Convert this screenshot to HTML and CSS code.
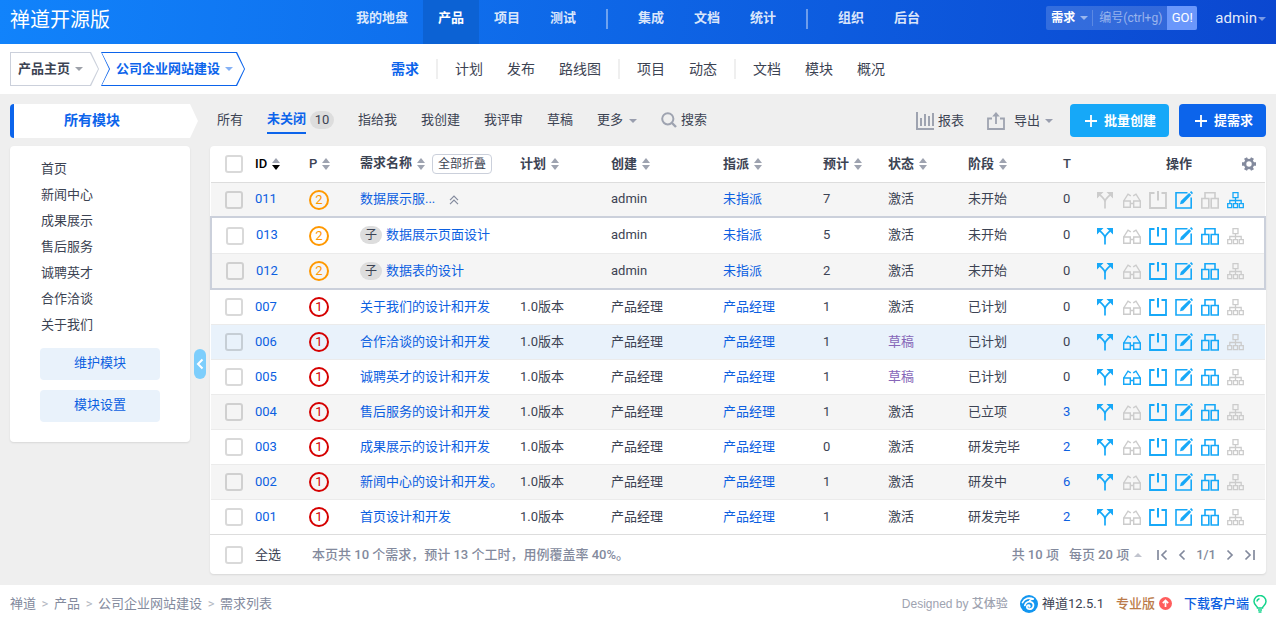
FILE: index.html
```html
<!DOCTYPE html>
<html lang="zh-CN">
<head>
    <meta charset="UTF-8">
    <meta name="viewport" content="width=device-width, initial-scale=1.0">
    <title>需求列表</title>
    <link rel="stylesheet" href="styles.css">
</head>
<body>
    <!-- icon set -->
    <svg class="icon-defs" aria-hidden="true">
        <symbol id="i-fork" viewBox="0 0 18 18">
            <path d="M8 17.500V11C8 8 5.500 6.500 3 4M8 11C8 8 10.500 6.500 13 4" fill="none" stroke="currentColor" stroke-width="1.700"/>
            <path d="M0 1h6.500L0 7.500zM16 1H9.500l6.500 6.500z" fill="currentColor"/>
        </symbol>
        <symbol id="i-glasses" viewBox="0 0 18 18">
            <path d="M.7 10h6.600v6.300H.7zM10.700 10h6.600v6.300h-6.600zM7.300 12.500h3.400M.7 10L5 3.200l2.800 1.600M17.300 10L13 3.200l-2.800 1.600" fill="none" stroke="currentColor" stroke-width="1.400"/>
        </symbol>
        <symbol id="i-close" viewBox="0 0 18 18">
            <path d="M5.500 2H1v15h16V2h-4.500" fill="none" stroke="currentColor" stroke-width="1.800"/>
            <path d="M9 0v9.500" stroke="currentColor" stroke-width="2"/>
        </symbol>
        <symbol id="i-edit" viewBox="0 0 18 18">
            <path d="M12.500 1.800H1V17h15.200V6.500" fill="none" stroke="currentColor" stroke-width="1.600"/>
            <path d="M5 13.200l.8-3.200 8.300-8 2.100 2.100-8 8.300zM14.900 1.200L16.200 0 18 1.900l-1.100 1.400z" fill="currentColor"/>
        </symbol>
        <symbol id="i-copy" viewBox="0 0 18 18">
            <path d="M4 7.500V1.800h10V7.500M.8 7.500h7V17h-7zM10.200 7.500h7V17h-7z" fill="none" stroke="currentColor" stroke-width="1.600"/>
        </symbol>
        <symbol id="i-tree" viewBox="0 0 18 18">
            <path d="M6 1.600h5v5H6zM8.500 6.600v6M2.800 12.600V9.500h11.400v3.100M.7 12.600h4v4h-4zM6.500 12.600h4v4h-4zM12.300 12.600h4v4h-4z" fill="none" stroke="currentColor" stroke-width="1.300"/>
        </symbol>
        <symbol id="i-sort" viewBox="0 0 10 14">
            <path class="up" d="M1 6l4-5 4 5z"/>
            <path class="down" d="M1 8l4 5 4-5z"/>
        </symbol>
        <symbol id="i-plus" viewBox="0 0 14 14">
            <path d="M7 1v12M1 7h12" stroke="currentColor" stroke-width="1.800"/>
        </symbol>
    </svg>

    <header class="header">
        <h1 class="brand">禅道开源版</h1>
        <nav class="main-nav">
            <a href="#">我的地盘</a>
            <a href="#" class="active">产品</a>
            <a href="#">项目</a>
            <a href="#">测试</a>
            <span class="divider"></span>
            <a href="#">集成</a>
            <a href="#">文档</a>
            <a href="#">统计</a>
            <span class="divider"></span>
            <a href="#">组织</a>
            <a href="#">后台</a>
        </nav>
        <div class="header-right">
            <form class="search-box">
                <button type="button" class="search-type">需求<span class="caret"></span></button>
                <input type="text" placeholder="编号(ctrl+g)" aria-label="编号">
                <button type="button" class="search-go">GO!</button>
            </form>
            <a href="#" class="user">admin<span class="caret"></span></a>
        </div>
    </header>

    <div class="subheader">
        <div class="switchers">
            <button type="button" class="crumb crumb-home"><span>产品主页</span><span class="caret"></span></button>
            <button type="button" class="crumb crumb-product"><span>公司企业网站建设</span><span class="caret"></span></button>
        </div>
        <nav class="sub-nav">
            <a href="#" class="active">需求</a>
            <span class="divider"></span>
            <a href="#">计划</a>
            <a href="#">发布</a>
            <a href="#">路线图</a>
            <span class="divider"></span>
            <a href="#">项目</a>
            <a href="#">动态</a>
            <span class="divider"></span>
            <a href="#">文档</a>
            <a href="#">模块</a>
            <a href="#">概况</a>
        </nav>
    </div>

    <main class="main">
        <aside class="sidebar">
            <div class="module-title">所有模块</div>
            <div class="module-card">
                <ul>
                    <li><a href="#">首页</a></li>
                    <li><a href="#">新闻中心</a></li>
                    <li><a href="#">成果展示</a></li>
                    <li><a href="#">售后服务</a></li>
                    <li><a href="#">诚聘英才</a></li>
                    <li><a href="#">合作洽谈</a></li>
                    <li><a href="#">关于我们</a></li>
                </ul>
                <a href="#" class="module-btn">维护模块</a>
                <a href="#" class="module-btn">模块设置</a>
            </div>
        </aside>
        <div class="splitter">
            <button type="button" class="collapse" aria-label="收起">
                <svg width="8" height="12" viewBox="0 0 8 12"><path d="M6.500 1.500L2 6l4.500 4.500" fill="none" stroke="currentColor" stroke-width="2"/></svg>
            </button>
        </div>

        <section class="content">
            <div class="toolbar">
                <div class="filters">
                    <a href="#">所有</a>
                    <a href="#" class="active"><span class="label">未关闭</span><span class="count">10</span></a>
                    <a href="#">指给我</a>
                    <a href="#">我创建</a>
                    <a href="#">我评审</a>
                    <a href="#">草稿</a>
                    <a href="#">更多<span class="caret"></span></a>
                    <a href="#" class="search-link"><svg width="16" height="16" viewBox="0 0 16 16"><path d="M11 11l4 4" stroke="currentColor" stroke-width="2.400"/><circle cx="6.800" cy="6.800" r="5.600" fill="none" stroke="currentColor" stroke-width="2"/></svg>搜索</a>
                </div>
                <div class="tools">
                    <a href="#" class="tool report"><svg width="18" height="18" viewBox="0 0 18 18"><path d="M1 0v17h17M5 14V6M9 14V2M13 14V4M17 14V1" fill="none" stroke="currentColor" stroke-width="2"/></svg>报表</a>
                    <a href="#" class="tool export"><svg width="18" height="18" viewBox="0 0 18 18"><path d="M5 6.500H1V17h16V6.500h-4M9 12V2" fill="none" stroke="currentColor" stroke-width="1.800"/><path d="M5.200 4.500L9 0l3.800 4.500z" fill="currentColor"/></svg>导出<span class="caret"></span></a>
                    <a href="#" class="btn btn-info"><svg width="14" height="14"><use href="#i-plus"/></svg>批量创建</a>
                    <a href="#" class="btn btn-primary"><svg width="14" height="14"><use href="#i-plus"/></svg>提需求</a>
                </div>
            </div>

            <div class="panel">
                <table class="stories">
                    <colgroup>
                        <col class="c-id"><col class="c-pri"><col class="c-name"><col class="c-plan"><col class="c-open"><col class="c-assign"><col class="c-est"><col class="c-status"><col class="c-stage"><col class="c-t"><col class="c-act">
                    </colgroup>
                    <thead>
                        <tr>
                            <th class="id latin sorted"><input type="checkbox" aria-label="全选"><a href="#">ID</a><svg class="sort"><use href="#i-sort"/></svg></th>
                            <th class="latin">P<svg class="sort"><use href="#i-sort"/></svg></th>
                            <th>需求名称<svg class="sort"><use href="#i-sort"/></svg><button type="button" class="fold-all">全部折叠</button></th>
                            <th>计划<svg class="sort"><use href="#i-sort"/></svg></th>
                            <th>创建<svg class="sort"><use href="#i-sort"/></svg></th>
                            <th>指派<svg class="sort"><use href="#i-sort"/></svg></th>
                            <th>预计<svg class="sort"><use href="#i-sort"/></svg></th>
                            <th>状态<svg class="sort"><use href="#i-sort"/></svg></th>
                            <th>阶段<svg class="sort"><use href="#i-sort"/></svg></th>
                            <th class="latin">T</th>
                            <th>
                                <div class="act-head"><span>操作</span>
                                    <button type="button" aria-label="自定义列"><svg width="14" height="14" viewBox="0 0 14 14"><path d="M0 7h14M3.500 1l7 12M10.500 1l-7 12" stroke="currentColor" stroke-width="3.400"/><circle cx="7" cy="7" r="5.200" fill="currentColor"/><circle cx="7" cy="7" r="2.700" fill="#fff"/></svg></button>
                                </div>
                            </th>
                        </tr>
                    </thead>
                    <tbody>
                        <tr class="striped">
                            <td class="id"><input type="checkbox" aria-label="011"><a href="#">011</a></td>
                            <td><span class="pri pri-2">2</span></td>
                            <td><a href="#">数据展示服...</a><button type="button" class="fold" aria-label="折叠"><svg width="10" height="10" viewBox="0 0 10 10"><path d="M1 5.200l4-4 4 4M1 9.200l4-4 4 4" fill="none" stroke="currentColor" stroke-width="1.200"/></svg></button></td>
                            <td></td><td>admin</td><td><a href="#">未指派</a></td><td>7</td><td>激活</td><td>未开始</td><td>0</td>
                            <td class="acts"><button disabled aria-label="变更"><svg><use href="#i-fork"/></svg></button><button disabled aria-label="评审"><svg><use href="#i-glasses"/></svg></button><button disabled aria-label="关闭"><svg><use href="#i-close"/></svg></button><button aria-label="编辑"><svg><use href="#i-edit"/></svg></button><button disabled aria-label="建用例"><svg><use href="#i-copy"/></svg></button><button aria-label="细分"><svg><use href="#i-tree"/></svg></button></td>
                        </tr>
                    </tbody>
                    <tbody class="children">
                        <tr>
                            <td class="id"><input type="checkbox" aria-label="013"><a href="#">013</a></td>
                            <td><span class="pri pri-2">2</span></td>
                            <td><span class="child">子</span><a href="#">数据展示页面设计</a></td>
                            <td></td><td>admin</td><td><a href="#">未指派</a></td><td>5</td><td>激活</td><td>未开始</td><td>0</td>
                            <td class="acts"><button aria-label="变更"><svg><use href="#i-fork"/></svg></button><button disabled aria-label="评审"><svg><use href="#i-glasses"/></svg></button><button aria-label="关闭"><svg><use href="#i-close"/></svg></button><button aria-label="编辑"><svg><use href="#i-edit"/></svg></button><button aria-label="建用例"><svg><use href="#i-copy"/></svg></button><button disabled aria-label="细分"><svg><use href="#i-tree"/></svg></button></td>
                        </tr>
                        <tr class="striped">
                            <td class="id"><input type="checkbox" aria-label="012"><a href="#">012</a></td>
                            <td><span class="pri pri-2">2</span></td>
                            <td><span class="child">子</span><a href="#">数据表的设计</a></td>
                            <td></td><td>admin</td><td><a href="#">未指派</a></td><td>2</td><td>激活</td><td>未开始</td><td>0</td>
                            <td class="acts"><button aria-label="变更"><svg><use href="#i-fork"/></svg></button><button disabled aria-label="评审"><svg><use href="#i-glasses"/></svg></button><button aria-label="关闭"><svg><use href="#i-close"/></svg></button><button aria-label="编辑"><svg><use href="#i-edit"/></svg></button><button aria-label="建用例"><svg><use href="#i-copy"/></svg></button><button disabled aria-label="细分"><svg><use href="#i-tree"/></svg></button></td>
                        </tr>
                    </tbody>
                    <tbody class="rest">
                        <tr>
                            <td class="id"><input type="checkbox" aria-label="007"><a href="#">007</a></td>
                            <td><span class="pri pri-1">1</span></td>
                            <td><a href="#">关于我们的设计和开发</a></td>
                            <td>1.0版本</td><td>产品经理</td><td><a href="#">产品经理</a></td><td>1</td><td>激活</td><td>已计划</td><td>0</td>
                            <td class="acts"><button aria-label="变更"><svg><use href="#i-fork"/></svg></button><button disabled aria-label="评审"><svg><use href="#i-glasses"/></svg></button><button aria-label="关闭"><svg><use href="#i-close"/></svg></button><button aria-label="编辑"><svg><use href="#i-edit"/></svg></button><button aria-label="建用例"><svg><use href="#i-copy"/></svg></button><button disabled aria-label="细分"><svg><use href="#i-tree"/></svg></button></td>
                        </tr>
                        <tr class="hover">
                            <td class="id"><input type="checkbox" aria-label="006"><a href="#">006</a></td>
                            <td><span class="pri pri-1">1</span></td>
                            <td><a href="#">合作洽谈的设计和开发</a></td>
                            <td>1.0版本</td><td>产品经理</td><td><a href="#">产品经理</a></td><td>1</td><td class="draft">草稿</td><td>已计划</td><td>0</td>
                            <td class="acts"><button aria-label="变更"><svg><use href="#i-fork"/></svg></button><button aria-label="评审"><svg><use href="#i-glasses"/></svg></button><button aria-label="关闭"><svg><use href="#i-close"/></svg></button><button aria-label="编辑"><svg><use href="#i-edit"/></svg></button><button aria-label="建用例"><svg><use href="#i-copy"/></svg></button><button disabled aria-label="细分"><svg><use href="#i-tree"/></svg></button></td>
                        </tr>
                        <tr>
                            <td class="id"><input type="checkbox" aria-label="005"><a href="#">005</a></td>
                            <td><span class="pri pri-1">1</span></td>
                            <td><a href="#">诚聘英才的设计和开发</a></td>
                            <td>1.0版本</td><td>产品经理</td><td><a href="#">产品经理</a></td><td>1</td><td class="draft">草稿</td><td>已计划</td><td>0</td>
                            <td class="acts"><button aria-label="变更"><svg><use href="#i-fork"/></svg></button><button aria-label="评审"><svg><use href="#i-glasses"/></svg></button><button aria-label="关闭"><svg><use href="#i-close"/></svg></button><button aria-label="编辑"><svg><use href="#i-edit"/></svg></button><button aria-label="建用例"><svg><use href="#i-copy"/></svg></button><button disabled aria-label="细分"><svg><use href="#i-tree"/></svg></button></td>
                        </tr>
                        <tr class="striped">
                            <td class="id"><input type="checkbox" aria-label="004"><a href="#">004</a></td>
                            <td><span class="pri pri-1">1</span></td>
                            <td><a href="#">售后服务的设计和开发</a></td>
                            <td>1.0版本</td><td>产品经理</td><td><a href="#">产品经理</a></td><td>1</td><td>激活</td><td>已立项</td><td><a href="#">3</a></td>
                            <td class="acts"><button aria-label="变更"><svg><use href="#i-fork"/></svg></button><button disabled aria-label="评审"><svg><use href="#i-glasses"/></svg></button><button aria-label="关闭"><svg><use href="#i-close"/></svg></button><button aria-label="编辑"><svg><use href="#i-edit"/></svg></button><button aria-label="建用例"><svg><use href="#i-copy"/></svg></button><button disabled aria-label="细分"><svg><use href="#i-tree"/></svg></button></td>
                        </tr>
                        <tr>
                            <td class="id"><input type="checkbox" aria-label="003"><a href="#">003</a></td>
                            <td><span class="pri pri-1">1</span></td>
                            <td><a href="#">成果展示的设计和开发</a></td>
                            <td>1.0版本</td><td>产品经理</td><td><a href="#">产品经理</a></td><td>0</td><td>激活</td><td>研发完毕</td><td><a href="#">2</a></td>
                            <td class="acts"><button aria-label="变更"><svg><use href="#i-fork"/></svg></button><button disabled aria-label="评审"><svg><use href="#i-glasses"/></svg></button><button aria-label="关闭"><svg><use href="#i-close"/></svg></button><button aria-label="编辑"><svg><use href="#i-edit"/></svg></button><button aria-label="建用例"><svg><use href="#i-copy"/></svg></button><button disabled aria-label="细分"><svg><use href="#i-tree"/></svg></button></td>
                        </tr>
                        <tr class="striped">
                            <td class="id"><input type="checkbox" aria-label="002"><a href="#">002</a></td>
                            <td><span class="pri pri-1">1</span></td>
                            <td><a href="#">新闻中心的设计和开发。</a></td>
                            <td>1.0版本</td><td>产品经理</td><td><a href="#">产品经理</a></td><td>1</td><td>激活</td><td>研发中</td><td><a href="#">6</a></td>
                            <td class="acts"><button aria-label="变更"><svg><use href="#i-fork"/></svg></button><button disabled aria-label="评审"><svg><use href="#i-glasses"/></svg></button><button aria-label="关闭"><svg><use href="#i-close"/></svg></button><button aria-label="编辑"><svg><use href="#i-edit"/></svg></button><button aria-label="建用例"><svg><use href="#i-copy"/></svg></button><button disabled aria-label="细分"><svg><use href="#i-tree"/></svg></button></td>
                        </tr>
                        <tr>
                            <td class="id"><input type="checkbox" aria-label="001"><a href="#">001</a></td>
                            <td><span class="pri pri-1">1</span></td>
                            <td><a href="#">首页设计和开发</a></td>
                            <td>1.0版本</td><td>产品经理</td><td><a href="#">产品经理</a></td><td>1</td><td>激活</td><td>研发完毕</td><td><a href="#">2</a></td>
                            <td class="acts"><button aria-label="变更"><svg><use href="#i-fork"/></svg></button><button disabled aria-label="评审"><svg><use href="#i-glasses"/></svg></button><button aria-label="关闭"><svg><use href="#i-close"/></svg></button><button aria-label="编辑"><svg><use href="#i-edit"/></svg></button><button aria-label="建用例"><svg><use href="#i-copy"/></svg></button><button disabled aria-label="细分"><svg><use href="#i-tree"/></svg></button></td>
                        </tr>
                    </tbody>
                </table>
                <div class="table-footer">
                    <label class="check-all"><input type="checkbox">全选</label>
                    <span class="summary">本页共 10 个需求，预计 13 个工时，用例覆盖率 40%。</span>
                    <div class="pager">
                        <span>共 10 项</span>
                        <button type="button" class="per-page">每页 20 项<span class="caret caret-up"></span></button>
                        <button type="button" aria-label="首页"><svg width="12" height="12" viewBox="0 0 12 12"><path d="M2 1v10M10.500 1.500L6 6l4.500 4.500" fill="none" stroke="currentColor" stroke-width="1.700"/></svg></button>
                        <button type="button" aria-label="上一页"><svg width="8" height="12" viewBox="0 0 8 12"><path d="M6.500 1.500L2 6l4.500 4.500" fill="none" stroke="currentColor" stroke-width="1.700"/></svg></button>
                        <span class="page-no">1/1</span>
                        <button type="button" aria-label="下一页"><svg width="8" height="12" viewBox="0 0 8 12"><path d="M1.500 1.500L6 6l-4.500 4.500" fill="none" stroke="currentColor" stroke-width="1.700"/></svg></button>
                        <button type="button" aria-label="末页"><svg width="12" height="12" viewBox="0 0 12 12"><path d="M10 1v10M1.500 1.500L6 6l-4.500 4.500" fill="none" stroke="currentColor" stroke-width="1.700"/></svg></button>
                    </div>
                </div>
            </div>
        </section>
    </main>

    <footer class="footer">
        <nav class="path">
            <a href="#">禅道</a><i>&gt;</i><a href="#">产品</a><i>&gt;</i><a href="#">公司企业网站建设</a><i>&gt;</i><span>需求列表</span>
        </nav>
        <div class="powered">
            <span class="designed">Designed by <b>艾体验</b></span>
            <a href="#" class="version"><svg width="18" height="18" viewBox="0 0 18 18"><circle cx="9" cy="9" r="9" fill="#1296f0"/><path d="M2.500 7.500C4.500 3 9.500 2 13.800 4.200C11.500 3.800 10 4.800 9.500 6M4.800 10.500C5.500 7.200 9 5.600 11.800 7.200C14.800 9.200 13.500 14.200 9.500 14.200C6.200 14.200 6 10.300 8.600 10.200C10 10.200 10.200 11.600 9.200 11.900" fill="none" stroke="#fff" stroke-width="1.700" stroke-linecap="round"/></svg>禅道12.5.1</a>
            <a href="#" class="pro">专业版<svg width="13" height="13" viewBox="0 0 13 13"><circle cx="6.500" cy="6.500" r="6.500" fill="#ff5d5d"/><path d="M6.500 10V4M3.800 6.200l2.700-2.700 2.700 2.700" fill="none" stroke="#fff" stroke-width="1.700"/></svg></a>
            <a href="#" class="download">下载客户端<svg width="14" height="18" viewBox="0 0 14 18"><path d="M4.500 13C4.500 11 1 10 1 6.500a6 6 0 0 1 12 0C13 10 9.500 11 9.500 13zM5 15h4M5.500 17h3M4 6.500a3 3 0 0 1 2.500-2.800" fill="none" stroke="#14d48c" stroke-width="1.500"/></svg></a>
        </div>
    </footer>
</body>
</html>
```
FILE: styles.css
```css
* {
    margin: 0;
    padding: 0;
    box-sizing: border-box;
}

body {
    min-height: 100vh;
    display: flex;
    flex-direction: column;
    background-color: #efefef;
    color: #3c4353;
    font-family: Roboto, "Noto Sans CJK SC", sans-serif;
    font-size: 13px;
    line-height: 20px;
}

a {
    color: inherit;
    text-decoration: none;
}

button,
input {
    font: inherit;
    color: inherit;
    border: none;
    background: none;
}

button {
    cursor: pointer;
}

ul {
    list-style: none;
}

.icon-defs {
    position: absolute;
    width: 0;
    height: 0;
}

.caret {
    display: inline-block;
    width: 0;
    height: 0;
    border-top: 4px solid currentColor;
    border-left: 4px solid transparent;
    border-right: 4px solid transparent;
    vertical-align: middle;
    opacity: 0.5;
}

.caret-up {
    border-top: none;
    border-bottom: 4px solid currentColor;
}

/* Header */
.header {
    display: grid;
    grid-template-columns: 1fr auto 1fr;
    align-items: center;
    height: 44px;
    padding: 0 10px;
    color: #fff;
    background: linear-gradient(95deg, #1183fb, #0b47d0);
}

.brand {
    font-size: 20px;
    font-weight: 400;
    line-height: 24px;
    padding-bottom: 5px;
}

.main-nav {
    display: flex;
    align-items: center;
    font-weight: 700;
}

.main-nav a {
    height: 44px;
    padding: 0 15px;
    line-height: 36px;
    color: rgba(255, 255, 255, 0.85);
}

.main-nav a.active {
    color: #fff;
    background-color: #0c62d4;
}

.main-nav .divider {
    width: 2px;
    height: 20px;
    margin: 0 15px 6px;
    background-color: rgba(255, 255, 255, 0.4);
}

.header-right {
    display: flex;
    justify-content: flex-end;
    align-items: center;
    gap: 18px;
    height: 44px;
    padding-bottom: 8px;
}

.search-box {
    display: flex;
    align-items: center;
    width: 151px;
    height: 24px;
    border-radius: 2px;
    overflow: hidden;
    font-size: 12px;
    background-color: rgba(255, 255, 255, 0.16);
}

.search-type {
    display: flex;
    align-items: center;
    gap: 5px;
    height: 16px;
    padding: 0 4px 0 5px;
    font-weight: 700;
    border-right: 1px solid rgba(255, 255, 255, 0.2);
}

.search-box input {
    flex: 1;
    min-width: 0;
    padding-left: 6px;
    outline: none;
}

.search-box input::placeholder {
    color: rgba(255, 255, 255, 0.5);
}

.search-go {
    width: 30px;
    height: 24px;
    font-size: 13px;
    background-color: #6a97fb;
}

.user {
    font-size: 15px;
    color: rgba(255, 255, 255, 0.9);
}

.user .caret {
    margin-left: 1px;
}

/* Sub header */
.subheader {
    display: grid;
    grid-template-columns: 1fr auto 1fr;
    align-items: center;
    height: 50px;
    padding: 0 10px;
    background-color: #fff;
}

.switchers {
    display: flex;
    gap: 2px;
}

.crumb {
    position: relative;
    z-index: 0;
    display: flex;
    align-items: center;
    gap: 5px;
    height: 34px;
    font-weight: 700;
    background-color: #cbd0db;
}

.crumb::before {
    content: '';
    position: absolute;
    z-index: -1;
    inset: 1px;
    background-color: #fff;
}

.crumb-home {
    padding: 0 16px 0 8px;
}

.crumb-home,
.crumb-home::before {
    clip-path: polygon(0 0, calc(100% - 8px) 0, 100% 50%, calc(100% - 8px) 100%, 0 100%);
}

.crumb-product {
    padding: 0 12px 0 15px;
    color: #0c64eb;
    background-color: #0c64eb;
}

.crumb-product,
.crumb-product::before {
    clip-path: polygon(0 0, calc(100% - 8px) 0, 100% 50%, calc(100% - 8px) 100%, 0 100%, 8px 50%);
}

.sub-nav {
    display: flex;
    align-items: center;
    font-size: 14px;
}

.sub-nav a {
    padding: 0 12px;
}

.sub-nav .active {
    font-weight: 700;
    color: #0c64eb;
}

.sub-nav .divider {
    width: 2px;
    height: 20px;
    margin: 0 5px;
    background-color: #efefef;
}

/* Main */
.main {
    flex: 1;
    display: flex;
    padding: 10px 10px 11px;
}

.sidebar {
    width: 180px;
}

.module-title {
    height: 34px;
    margin-right: -8px;
    padding-right: 28px;
    border-left: 4px solid #0c64eb;
    border-radius: 4px 0 0 4px;
    background-color: #fff;
    clip-path: polygon(0 0, calc(100% - 8px) 0, 100% 50%, calc(100% - 8px) 100%, 0 100%);
    font-size: 14px;
    font-weight: 700;
    line-height: 32px;
    text-align: center;
    color: #0c64eb;
}

.module-card {
    margin-top: 8px;
    padding: 10px 30px 20px;
    border-radius: 4px;
    background-color: #fff;
    box-shadow: 0 1px 2px rgba(0, 0, 0, 0.1);
}

.module-card ul {
    margin-bottom: 10px;
    padding-left: 1px;
}

.module-card li {
    line-height: 26px;
}

.module-btn {
    display: block;
    height: 32px;
    margin-bottom: 10px;
    border-radius: 4px;
    background-color: #e9f2fb;
    line-height: 30px;
    text-align: center;
    color: #0c60e1;
}

.module-card .module-btn:last-child {
    margin-bottom: 0;
}

.splitter {
    display: flex;
    width: 20px;
    padding: 50px 4px 0;
    align-items: center;
    align-self: stretch;
}

.collapse {
    display: flex;
    align-items: center;
    justify-content: center;
    width: 12px;
    height: 30px;
    border-radius: 6px;
    color: #fff;
    background-color: #7dcefc;
}

.content {
    flex: 1;
    min-width: 0;
}

.toolbar {
    display: flex;
    justify-content: space-between;
    height: 34px;
    padding-left: 7px;
}

.filters {
    display: flex;
    align-items: center;
    gap: 24px;
    padding-bottom: 2px;
}

.filters .active {
    display: flex;
    align-items: center;
    gap: 4px;
}

.filters .label {
    height: 28px;
    line-height: 26px;
    border-bottom: 2px solid #0c64eb;
    font-weight: 700;
    color: #0c64eb;
}

.filters .count {
    min-width: 24px;
    height: 18px;
    border-radius: 9px;
    line-height: 18px;
    text-align: center;
    background-color: #ddd;
}

.filters .caret,
.tool .caret {
    margin-left: 6px;
    color: #838a9d;
    opacity: 0.8;
}

.search-link,
.tool {
    display: flex;
    align-items: center;
    gap: 4px;
}

.search-link svg,
.tool svg {
    color: #9ea3b0;
}

.tools {
    display: flex;
    align-items: flex-start;
    gap: 10px;
}

.tool {
    height: 33px;
}

.report {
    margin-right: 13px;
}

.export {
    gap: 9px;
    margin-right: 7px;
}

.export .caret {
    margin-left: -4px;
}

.btn {
    display: flex;
    align-items: center;
    gap: 6px;
    height: 33px;
    padding: 0 13px 0 14px;
    border-radius: 4px;
    font-weight: 700;
    color: #fff;
}

.btn-info {
    background-color: #16a8f8;
}

.btn-primary {
    padding-left: 15px;
    background-color: #0c64eb;
}

/* Story table */
.panel {
    margin-top: 8px;
    border-radius: 4px;
    background-color: #fff;
    box-shadow: 0 1px 2px rgba(0, 0, 0, 0.1);
}

.stories {
    width: 100%;
    table-layout: fixed;
    border-collapse: collapse;
}

.c-id { width: 90px; }
.c-pri { width: 51px; }
.c-plan { width: 91px; }
.c-open { width: 112px; }
.c-assign { width: 100px; }
.c-est { width: 65px; }
.c-status { width: 80px; }
.c-stage { width: 95px; }
.c-t { width: 34px; }
.c-act { width: 176px; }

.stories th,
.stories td {
    height: 35px;
    padding: 0 8px;
    text-align: left;
    white-space: nowrap;
    border-bottom: 1px solid #ebebeb;
}

.stories thead th {
    height: 36px;
    font-weight: 700;
    border-bottom-color: #ddd;
}

.stories thead .latin {
    font-weight: 500;
}

.stories td a {
    color: #0c60e1;
}

.stories .id {
    padding-left: 14px;
    padding-right: 0;
}

.sort {
    width: 10px;
    height: 14px;
    margin-left: 4px;
    vertical-align: middle;
    fill: #9ea3b0;
}

.sorted {
    color: #000;
}

.sorted .sort {
    --down: #000;
}

.sort + .fold-all {
    margin-left: 6px;
}

.down {
    fill: var(--down, #9ea3b0);
}

input[type="checkbox"] {
    appearance: none;
    width: 18px;
    height: 18px;
    margin-right: 12px;
    border: 2px solid rgba(0, 0, 0, 0.15);
    border-radius: 3px;
    vertical-align: middle;
}

.fold-all {
    height: 20px;
    padding: 0 5px;
    border: 1px solid #cbd0db;
    border-radius: 4px;
    font-size: 12px;
    font-weight: 400;
    line-height: 18px;
    vertical-align: middle;
}

.act-head {
    display: flex;
    justify-content: space-between;
    align-items: center;
    padding-left: 69px;
}

.act-head button {
    display: flex;
    margin-right: 1px;
    color: #838a9d;
}

.striped {
    background-color: #f5f5f5;
}

.hover {
    background-color: #e9f2fb;
}

.children {
    border: 2px solid #cbd0db;
}

.children td {
    height: 36px;
}

.pri {
    display: inline-block;
    width: 20px;
    height: 20px;
    border: 2px solid;
    border-radius: 50%;
    line-height: 16px;
    text-align: center;
    vertical-align: middle;
}

.pri-1 {
    color: #d50000;
}

.pri-2 {
    color: #ff9800;
}

.child {
    display: inline-block;
    width: 22px;
    height: 18px;
    margin-right: 4px;
    border-radius: 9px;
    background-color: #ddd;
    font-size: 12px;
    line-height: 18px;
    text-align: center;
}

.fold {
    margin-left: 14px;
    vertical-align: middle;
    color: #838a9d;
}

.fold svg {
    display: block;
}

.draft {
    color: #8666b8;
}

.acts button {
    width: 18px;
    height: 18px;
    margin-right: 8px;
    color: #16a8f8;
    vertical-align: middle;
}

.acts button:disabled {
    color: #ccc;
}

.acts svg {
    display: block;
    width: 18px;
    height: 18px;
}

.table-footer {
    display: flex;
    align-items: center;
    height: 40px;
    padding: 0 10px 0 15px;
    border-top: 1px solid #ddd;
}

.rest tr:last-child td {
    border-bottom: none;
}

.summary {
    margin-left: 31px;
    font-weight: 500;
    color: #838a9d;
}

.pager {
    display: flex;
    align-items: center;
    gap: 10px;
    margin-left: auto;
    font-weight: 500;
    color: #838a9d;
}

.pager svg {
    display: block;
}

.per-page .caret {
    margin: 0 4px 0 5px;
}

/* Footer */
.footer {
    display: flex;
    align-items: center;
    justify-content: space-between;
    height: 33px;
    padding: 4px 9px 0 10px;
    background-color: #fff;
}

.path {
    color: #838a9d;
}

.path i {
    display: inline-block;
    width: 18px;
    font-style: normal;
    text-align: center;
    color: #b4b8c2;
}

.powered {
    display: flex;
    align-items: center;
    gap: 12px;
}

.powered a {
    display: flex;
    align-items: center;
    gap: 4px;
}

.designed {
    font-family: "Liberation Sans", "Noto Sans CJK SC", sans-serif;
    font-size: 12px;
    color: #9ea3b0;
}

.designed b {
    font-weight: 500;
}

.pro {
    font-weight: 500;
    color: #bb7b4a;
}

.download {
    font-weight: 500;
    color: #0c60e1;
}
```
